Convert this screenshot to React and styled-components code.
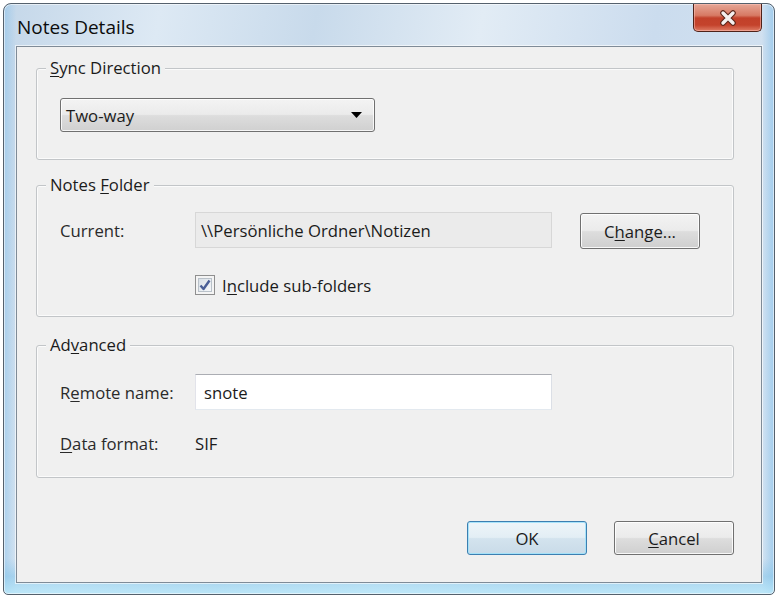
import React from 'react'
import styled, { createGlobalStyle } from 'styled-components'

const GlobalStyle = createGlobalStyle`
	body {
		margin: 0;
		background: #ffffff;
		font-family: 'Open Sans', 'Noto Sans', sans-serif;
		font-size: 16.7px;
		color: #1b1b1b;
	}
`

const Window = styled.div`
	box-sizing: border-box;
	width: 772px;
	height: 592px;
	margin: 3px 0 0 3px;
	border: 1px solid #55616d;
	border-radius: 8px 8px 5px 5px;
	padding: 0 12px 11px 12px;
	display: flex;
	flex-direction: column;
	box-shadow: inset 0 0 0 1px rgba(255, 255, 255, 0.55);
	background:
		linear-gradient(to bottom, rgba(255, 255, 255, 0) 0, rgba(255, 255, 255, 0) 94%, rgba(140, 200, 235, 0.6) 97%, rgba(185, 232, 250, 0.85) 100%),
		linear-gradient(to right, rgba(140, 195, 235, 0.55) 0, rgba(255, 255, 255, 0) 1.6%, rgba(255, 255, 255, 0) 98.4%, rgba(140, 195, 235, 0.7) 100%),
		linear-gradient(100deg, #c4d7e9 0%, #dde9f4 18%, #c8daeb 36%, #e2ecf5 55%, #cbdcee 75%, #d7e5f2 100%);
`

const TitleBar = styled.div`
	height: 42px;
	display: flex;
	justify-content: space-between;
	align-items: flex-start;
`

const Title = styled.div`
	padding: 11px 0 0 1px;
	font-size: 19px;
	line-height: 24px;
	color: #0c0c0c;
`

const CloseButton = styled.div`
	box-sizing: border-box;
	width: 69px;
	height: 28px;
	border: 1px solid #4f2219;
	border-top: none;
	border-radius: 0 0 5px 5px;
	display: flex;
	align-items: center;
	justify-content: center;
	box-shadow: inset 0 0 0 1px rgba(255, 200, 190, 0.5);
	background: linear-gradient(to bottom, #e6a797 0%, #d77a64 42%, #c2412a 52%, #c4432c 78%, #df7d66 100%);
`

const Client = styled.div`
	flex: 1;
	border: 1px solid #7f8b97;
	background: #f0f0f0;
	padding: 0 27px 0 19px;
	display: flex;
	flex-direction: column;
	box-shadow: 0 0 0 1px rgba(255, 255, 255, 0.6);
`

const GroupBox = styled.div`
	margin-top: ${(p) => p.$top}px;
	border: 1px solid #c2c5c8;
	border-radius: 3px;
	box-shadow: inset 0 0 0 1px rgba(255, 255, 255, 0.7);
`

const Legend = styled.div`
	width: fit-content;
	margin: -11px 0 0 9px;
	padding: 0 4px;
	line-height: 20px;
	background: #f0f0f0;
	color: #1b1b1b;
`

const Body = styled.div`
	padding: ${(p) => p.$pad};
`

const Key = styled.span`
	text-decoration: underline;
	text-underline-offset: 2px;
`

const Combo = styled.div`
	box-sizing: border-box;
	width: 315px;
	height: 34px;
	border: 1px solid #707070;
	border-radius: 3px;
	padding: 0 12px 0 5px;
	display: flex;
	align-items: center;
	justify-content: space-between;
	box-shadow: inset 0 0 0 1px rgba(255, 255, 255, 0.8);
	background: linear-gradient(to bottom, #f3f3f3 0%, #ebebeb 48%, #dddddd 52%, #d0d0d0 100%);
`

const Row = styled.div`
	display: grid;
	grid-template-columns: 135px 357px auto;
	align-items: center;
	height: ${(p) => p.$h}px;
	margin-top: ${(p) => p.$gap || 0}px;
`

const Label = styled.div`
	color: #2a2a2a;
`

const ReadOnlyField = styled.div`
	box-sizing: border-box;
	height: 36px;
	align-self: start;
	border: 1px solid #d7d7d7;
	background: #ebebeb;
	padding: 0 5px;
	display: flex;
	align-items: center;
	white-space: nowrap;
	overflow: hidden;
`

const TextField = styled.div`
	box-sizing: border-box;
	height: 36px;
	border: 1px solid;
	border-color: #abadb3 #dbdfe6 #e3e9ef #e2e3ea;
	background: #ffffff;
	padding: 0 8px;
	display: flex;
	align-items: center;
`

const Button = styled.div`
	box-sizing: border-box;
	width: 120px;
	height: ${(p) => p.$h || 34}px;
	margin-left: ${(p) => p.$ml || 0}px;
	border: 1px solid ${(p) => (p.$default ? '#3c7fb1' : '#707070')};
	border-radius: 3px;
	display: flex;
	align-items: center;
	justify-content: center;
	color: #1b1b1b;
	box-shadow: inset 0 0 0 1px ${(p) => (p.$default ? 'rgba(160, 225, 250, 0.9)' : 'rgba(255, 255, 255, 0.85)')};
	background: ${(p) =>
		p.$default
			? 'linear-gradient(to bottom, #eef5f9 0%, #e3eef5 48%, #d3e3ee 52%, #c9dbe8 100%)'
			: 'linear-gradient(to bottom, #f3f3f3 0%, #ebebeb 48%, #dddddd 52%, #cfcfcf 100%)'};
`

const ChangeButton = styled(Button)`
	align-self: end;
`

const CheckRow = styled.div`
	grid-column: 2 / 4;
	display: flex;
	align-items: center;
	gap: 7px;
`

const CheckBox = styled.div`
	box-sizing: border-box;
	width: 20px;
	height: 20px;
	border: 1px solid #8f8f8f;
	background: #f4f4f4;
	padding: 2px;
	display: flex;
`

const CheckInner = styled.div`
	flex: 1;
	border: 1px solid #b9c1c9;
	background: linear-gradient(135deg, #d9e0e7 0%, #f5f7f9 100%);
	display: flex;
	align-items: center;
	justify-content: center;
`

const Footer = styled.div`
	display: flex;
	justify-content: flex-end;
	margin-top: 43px;
`

const CloseGlyph = () => (
	<svg width="20" height="16" viewBox="0 0 20 16">
		<path d="M5 3 L15 13 M15 3 L5 13" stroke="#5a2418" strokeWidth="5.5" strokeLinecap="round" />
		<path d="M5 3 L15 13 M15 3 L5 13" stroke="#f4f0ef" strokeWidth="3.4" strokeLinecap="round" />
	</svg>
)

const Arrow = () => (
	<svg width="11" height="6" viewBox="0 0 11 6">
		<path d="M0 0 H11 L5.5 6 Z" fill="#000" />
	</svg>
)

const Tick = () => (
	<svg width="12" height="12" viewBox="0 0 12 12">
		<path d="M1.5 6.5 L4.5 10 L10.5 1.5" fill="none" stroke="#4a5f97" strokeWidth="2.4" strokeLinejoin="round" />
	</svg>
)

const App = () => {
	return (
		<>
			<GlobalStyle />
			<Window>
				<TitleBar>
					<Title>Notes Details</Title>
					<CloseButton>
						<CloseGlyph />
					</CloseButton>
				</TitleBar>
				<Client>
					<GroupBox $top={21}>
						<Legend>
							<Key>S</Key>ync Direction
						</Legend>
						<Body $pad="20px 0 27px 23px">
							<Combo>
								<span>Two-way</span>
								<Arrow />
							</Combo>
						</Body>
					</GroupBox>

					<GroupBox $top={25}>
						<Legend>
							Notes <Key>F</Key>older
						</Legend>
						<Body $pad="17px 0 19px 23px">
							<Row $h={37}>
								<Label>Current:</Label>
								<ReadOnlyField>\\Persönliche Ordner\Notizen</ReadOnlyField>
								<ChangeButton $h={36} $ml={28}>
									C<Key>h</Key>ange...
								</ChangeButton>
							</Row>
							<Row $h={24} $gap={24}>
								<CheckRow>
									<CheckBox>
										<CheckInner>
											<Tick />
										</CheckInner>
									</CheckBox>
									<span>
										I<Key>n</Key>clude sub-folders
									</span>
								</CheckRow>
							</Row>
						</Body>
					</GroupBox>

					<GroupBox $top={28}>
						<Legend>
							Ad<Key>v</Key>anced
						</Legend>
						<Body $pad="19px 0 23px 23px">
							<Row $h={36}>
								<Label>
									R<Key>e</Key>mote name:
								</Label>
								<TextField>snote</TextField>
							</Row>
							<Row $h={22} $gap={22}>
								<Label>
									<Key>D</Key>ata format:
								</Label>
								<span>SIF</span>
							</Row>
						</Body>
					</GroupBox>

					<Footer>
						<Button $default>OK</Button>
						<Button $ml={27}>
							<Key>C</Key>ancel
						</Button>
					</Footer>
				</Client>
			</Window>
		</>
	)
}

export default App
